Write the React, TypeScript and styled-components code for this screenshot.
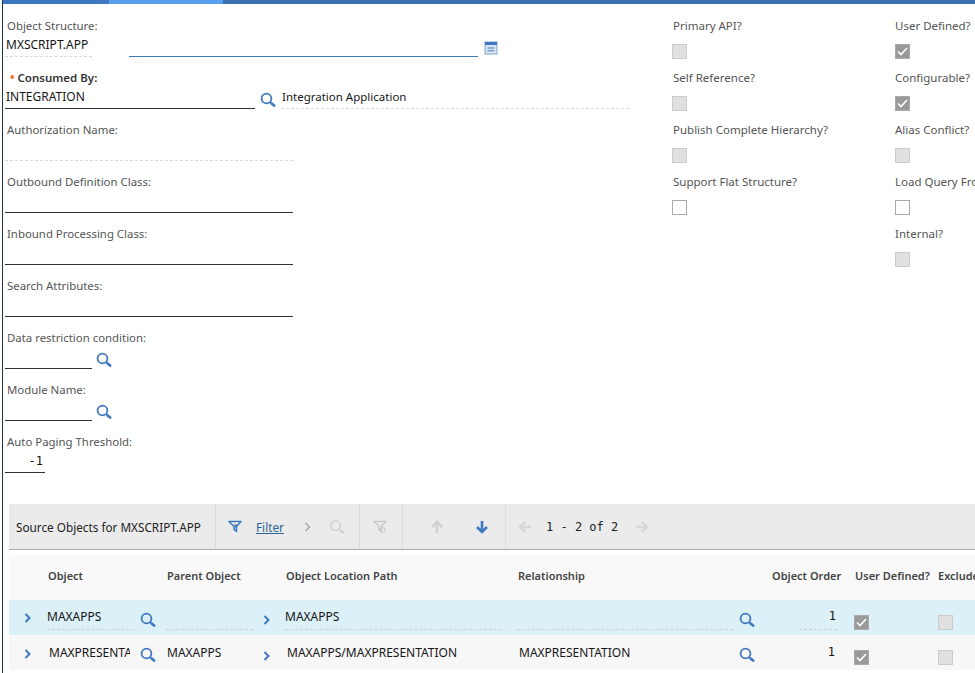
import React from "react";
import styled, { createGlobalStyle } from "styled-components";

const Global = createGlobalStyle`
  html, body { margin: 0; padding: 0; background: #fff; overflow: hidden; }
  body { font-family: "Noto Sans", "Liberation Sans", sans-serif; font-size: 12px; color: #161616; }
`;

const Page = styled.div`
  height: 673px; overflow: hidden; display: flex; flex-direction: column;
  border-left: 1px solid #1d3649; margin-left: 2px; box-sizing: border-box; width: 973px;
`;
const TopBar = styled.div`display: flex; height: 4px; background: #3b6fae; flex: none;`;
const TopSeg = styled.div<{ $w: number; $c: string }>`width: ${p => p.$w}px; background: ${p => p.$c};`;

const Form = styled.div`display: flex; height: 500px; flex: none; overflow: hidden;`;
const LeftCol = styled.div`width: 669px; flex: none; padding-left: 2px; box-sizing: border-box;`;
const CheckCol = styled.div<{ $w: number }>`width: ${p => p.$w}px; flex: none; white-space: nowrap;`;

const Field = styled.div`height: 52px; box-sizing: border-box; padding-top: 14px; position: relative;`;
const Label = styled.div<{ $bold?: boolean }>`
  height: 16px; line-height: 16px; padding-left: 2px; color: ${p => (p.$bold ? "#333" : "#555")};
  font-size: ${p => (p.$bold ? 11.5 : 11.4)}px;
  font-weight: ${p => (p.$bold ? 600 : 400)}; white-space: nowrap;
`;
const Req = styled.span`color: #f0782d; font-size: 12px; margin: 0 3px 0 3px; font-weight: 700;`;
const InputRow = styled.div`display: flex; align-items: flex-start; margin-top: 4px;`;
const Input = styled.div<{ $w: number; $line: "solid" | "dash" | "blue"; $ml?: number; $right?: boolean; $mono?: boolean; $fs?: number }>`
  width: ${p => p.$w}px; margin-left: ${p => p.$ml ?? 0}px; height: 19px; box-sizing: border-box; flex: none;
  line-height: 14px; padding: 0 ${p => (p.$right ? 2 : 1)}px; white-space: nowrap; color: #161616;
  font-size: ${p => p.$fs ?? 12}px; text-align: ${p => (p.$right ? "right" : "left")};
  font-family: ${p => (p.$mono ? '"DejaVu Sans Mono", monospace' : "inherit")};
  border-bottom: 1px ${p => (p.$line === "dash" ? "dashed #dadada" : p.$line === "blue" ? "solid #3f78b8" : "solid #333")};
`;
const IconSlot = styled.span<{ $ml: number; $mt?: number }>`
  display: block; flex: none; margin-left: ${p => p.$ml}px; margin-top: ${p => p.$mt ?? 0}px; line-height: 0;
`;

const CheckField = styled.div`height: 52px; box-sizing: border-box; padding-top: 14px; white-space: nowrap;`;
const CheckLabel = styled.div<{ $ml?: number }>`height: 16px; line-height: 16px; color: #555; font-size: 11.5px; margin-left: ${p => p.$ml ?? 0}px;`;
const Box = styled.span<{ $state: "off" | "on" | "open" }>`
  display: flex; align-items: center; justify-content: center; width: 15px; height: 15px; box-sizing: border-box;
  background: ${p => (p.$state === "on" ? "#999" : p.$state === "off" ? "#e0e0e0" : "#fff")};
  border: 1px solid ${p => (p.$state === "on" ? "#aaa" : p.$state === "off" ? "#ccc" : "#aaa")};
`;
const BoxWrap = styled.div`margin-top: 10px;`;

const Toolbar = styled.div`
  height: 46px; margin-left: 6px; background: #ebebeb; border-bottom: 1px solid #aaa; box-sizing: border-box;
  display: flex; align-items: stretch; flex: none; white-space: nowrap;
`;
const ToolSec = styled.div<{ $w: number; $last?: boolean }>`
  width: ${p => p.$w}px; flex: none; box-sizing: border-box; display: flex; align-items: center;
  border-right: ${p => (p.$last ? "none" : "1px solid #ddd")};
`;
const Title = styled.span`margin-left: 7px; font-size: 11.75px; color: #222;`;
const FilterLink = styled.a`font-size: 11.75px; color: #2a6496; text-decoration: underline; margin-left: 14px;`;
const Mono = styled.span`font-family: "DejaVu Sans Mono", monospace; font-size: 12px; color: #222; margin: 0 17px 0 14px;`;
const ToolIcon = styled.span<{ $ml: number }>`display: block; margin-left: ${p => p.$ml}px; line-height: 0; flex: none;`;

const Gap = styled.div`height: 5px; flex: none;`;
const TableWrap = styled.div`margin-left: 6px; flex: none;`;
const Cols = "38px 119px 119px 232px 254px 83px 83px 100px";
const Header = styled.div`
  display: grid; grid-template-columns: ${Cols}; height: 45px; box-sizing: border-box; padding-bottom: 4px;
  background: #f9f9f9; align-items: center;
`;
const HeadCell = styled.div`
  font-size: 11px; font-weight: 600; color: #444; white-space: nowrap; overflow: hidden; padding-left: 1px;
`;
const Row = styled.div<{ $sel?: boolean }>`
  display: grid; grid-template-columns: ${Cols}; height: 35px; align-items: start;
  background: ${p => (p.$sel ? "#dcf0f8" : "#f7f7f7")};
`;
const Cell = styled.div<{ $dx?: number }>`
  display: flex; align-items: flex-start; height: 35px; box-sizing: border-box; padding-left: ${p => p.$dx ?? 0}px; min-width: 0; overflow: hidden;
`;
const CellInput = styled.div<{ $w: number; $dash?: boolean; $right?: boolean; $mono?: boolean; $top?: number }>`
  width: ${p => p.$w}px; height: 30px; box-sizing: border-box; flex: none; padding-top: ${p => p.$top ?? 9}px; line-height: 15px; font-size: 12px; color: #161616;
  white-space: nowrap; overflow: hidden; text-align: ${p => (p.$right ? "right" : "left")};
  font-family: ${p => (p.$mono ? '"DejaVu Sans Mono", monospace' : "inherit")};
  padding-right: ${p => (p.$right ? 1 : 0)}px;
  border-bottom: 1px ${p => (p.$dash ? "dashed #c8d4da" : "solid transparent")};
`;
const Chevron = styled.span<{ $ml: number; $mt: number }>`display: block; margin-left: ${p => p.$ml}px; margin-top: ${p => p.$mt}px; line-height: 0; flex: none;`;
const RowBox = styled.div<{ $ml?: number }>`margin-top: 15px; margin-left: ${p => p.$ml ?? 0}px;`;

const Search = ({ c = "#3f78c0" }: { c?: string }) => (
  <svg width="16" height="16" viewBox="0 0 16 16" fill="none">
    <circle cx="6.5" cy="6.5" r="4.9" stroke={c} strokeWidth="1.8" />
    <path d="M10 10l1.2 1.2" stroke={c} strokeWidth="1.3" />
    <path d="M11.6 11.4l2.5 2.2" stroke={c} strokeWidth="2.7" strokeLinecap="round" />
  </svg>
);
const Detail = () => (
  <svg width="14" height="14" viewBox="0 0 14 14">
    <rect x="1" y="1" width="12" height="12" fill="#dce6f2" stroke="#7da3cf" />
    <rect x="1" y="1" width="12" height="3" fill="#3f78c0" />
    <path d="M3.5 7h7M3.5 9.8h7" stroke="#3f78c0" />
  </svg>
);
const Tick = () => (
  <svg width="11" height="9" viewBox="0 0 11 9" fill="none">
    <path d="M1 4.5l3 3L10 1" stroke="#fff" strokeWidth="1.6" />
  </svg>
);
const Chev = () => (
  <svg width="8" height="10" viewBox="0 0 8 10" fill="none">
    <path d="M1.5 1l4 4-4 4" stroke="#3f78c0" strokeWidth="2" />
  </svg>
);
const Funnel = ({ c, x }: { c: string; x?: boolean }) => (
  <svg width="14" height="14" viewBox="0 0 14 14" fill="none">
    <path d="M1 1.5h12L8.5 6.5v5L6 9.5v-3z" stroke={c} strokeWidth="1.5" strokeLinejoin="round" />
    {x ? <circle cx="9.5" cy="10" r="2.5" stroke={c} /> : <path d="M6 4.5h4.5L8 7V9.5z" fill={c} />}
  </svg>
);
const Arrow = ({ c, dir }: { c: string; dir: "up" | "down" | "left" | "right" }) => {
  const rot = { up: 0, right: 90, down: 180, left: 270 }[dir];
  return (
    <svg width="14" height="14" viewBox="0 0 14 14" fill="none" style={{ transform: `rotate(${rot}deg)` }}>
      <path d="M7 13V2M2 7l5-5 5 5" stroke={c} strokeWidth="2.6" />
    </svg>
  );
};

const Check = ({ s }: { s: "off" | "on" | "open" }) => <Box $state={s}>{s === "on" && <Tick />}</Box>;

const checks1: [string, "off" | "on" | "open"][] = [
  ["Primary API?", "off"],
  ["Self Reference?", "off"],
  ["Publish Complete Hierarchy?", "off"],
  ["Support Flat Structure?", "open"],
];
const checks2: [string, "off" | "on" | "open"][] = [
  ["User Defined?", "on"],
  ["Configurable?", "on"],
  ["Alias Conflict?", "off"],
  ["Load Query From", "open"],
  ["Internal?", "off"],
];

export default function App() {
  return (
    <Page>
      <Global />
      <TopBar>
        <TopSeg $w={106} $c="#3f78c0" />
        <TopSeg $w={114} $c="#5aa0f0" />
      </TopBar>
      <Form>
        <LeftCol>
          <Field>
            <Label>Object Structure:</Label>
            <InputRow>
              <Input $w={87} $line="dash">MXSCRIPT.APP</Input>
              <Input $w={349} $ml={37} $line="blue" />
              <IconSlot $ml={6} $mt={3}><Detail /></IconSlot>
            </InputRow>
          </Field>
          <Field>
            <Label $bold><Req>•</Req>Consumed By:</Label>
            <InputRow>
              <Input $w={250} $line="solid">INTEGRATION</Input>
              <IconSlot $ml={5} $mt={2}><Search /></IconSlot>
              <Input $w={348} $ml={5} $line="dash" $fs={11.5}>Integration Application</Input>
            </InputRow>
          </Field>
          <Field>
            <Label>Authorization Name:</Label>
            <InputRow><Input $w={288} $line="dash" /></InputRow>
          </Field>
          <Field>
            <Label>Outbound Definition Class:</Label>
            <InputRow><Input $w={288} $line="solid" /></InputRow>
          </Field>
          <Field>
            <Label>Inbound Processing Class:</Label>
            <InputRow><Input $w={288} $line="solid" /></InputRow>
          </Field>
          <Field>
            <Label>Search Attributes:</Label>
            <InputRow><Input $w={288} $line="solid" /></InputRow>
          </Field>
          <Field>
            <Label>Data restriction condition:</Label>
            <InputRow>
              <Input $w={87} $line="solid" />
              <IconSlot $ml={4} $mt={2}><Search /></IconSlot>
            </InputRow>
          </Field>
          <Field>
            <Label>Module Name:</Label>
            <InputRow>
              <Input $w={87} $line="solid" />
              <IconSlot $ml={4} $mt={2}><Search /></IconSlot>
            </InputRow>
          </Field>
          <Field>
            <Label>Auto Paging Threshold:</Label>
            <InputRow><Input $w={40} $line="solid" $right $mono>-1</Input></InputRow>
          </Field>
        </LeftCol>
        <CheckCol $w={223}>
          {checks1.map(([l, s]) => (
            <CheckField key={l}>
              <CheckLabel $ml={1}>{l}</CheckLabel>
              <BoxWrap><Check s={s} /></BoxWrap>
            </CheckField>
          ))}
        </CheckCol>
        <CheckCol $w={78}>
          {checks2.map(([l, s]) => (
            <CheckField key={l}>
              <CheckLabel>{l}</CheckLabel>
              <BoxWrap><Check s={s} /></BoxWrap>
            </CheckField>
          ))}
        </CheckCol>
      </Form>
      <Toolbar>
        <ToolSec $w={207}><Title>Source Objects for MXSCRIPT.APP</Title></ToolSec>
        <ToolSec $w={144}>
          <ToolIcon $ml={12}><Funnel c="#3f78c0" /></ToolIcon>
          <FilterLink>Filter</FilterLink>
          <ToolIcon $ml={20}><svg width="8" height="10" viewBox="0 0 8 10" fill="none"><path d="M1.5 1l4 4-4 4" stroke="#aaa" strokeWidth="1.6" /></svg></ToolIcon>
          <ToolIcon $ml={17}><Search c="#d4d4d4" /></ToolIcon>
        </ToolSec>
        <ToolSec $w={43}><ToolIcon $ml={13}><Funnel c="#c8c8c8" x /></ToolIcon></ToolSec>
        <ToolSec $w={103}>
          <ToolIcon $ml={27}><Arrow c="#d0d0d0" dir="up" /></ToolIcon>
          <ToolIcon $ml={31}><Arrow c="#3f78c0" dir="down" /></ToolIcon>
        </ToolSec>
        <ToolSec $w={300} $last>
          <ToolIcon $ml={12}><Arrow c="#d8d8d8" dir="left" /></ToolIcon>
          <Mono>1 - 2 of 2</Mono>
          <ToolIcon $ml={0}><Arrow c="#d8d8d8" dir="right" /></ToolIcon>
        </ToolSec>
      </Toolbar>
      <Gap />
      <TableWrap>
        <Header>
          <span />
          <HeadCell>Object</HeadCell>
          <HeadCell>Parent Object</HeadCell>
          <HeadCell>Object Location Path</HeadCell>
          <HeadCell>Relationship</HeadCell>
          <HeadCell>Object Order</HeadCell>
          <HeadCell>User Defined?</HeadCell>
          <HeadCell>Excluded?</HeadCell>
        </Header>
        <Row $sel>
          <Cell><Chevron $ml={15} $mt={13}><Chev /></Chevron></Cell>
          <Cell>
            <CellInput $w={87} $dash>MAXAPPS</CellInput>
            <IconSlot $ml={6} $mt={12}><Search /></IconSlot>
          </Cell>
          <Cell>
            <CellInput $w={87} $dash />
            <Chevron $ml={10} $mt={15}><Chev /></Chevron>
          </Cell>
          <Cell><CellInput $w={217} $dash>MAXAPPS</CellInput></Cell>
          <Cell>
            <CellInput $w={216} $dash />
            <IconSlot $ml={6} $mt={12}><Search /></IconSlot>
          </Cell>
          <Cell $dx={28}><CellInput $w={38} $dash $right $mono>1</CellInput></Cell>
          <Cell><RowBox><Check s="on" /></RowBox></Cell>
          <Cell><RowBox $ml={1}><Check s="off" /></RowBox></Cell>
        </Row>
        <Row>
          <Cell><Chevron $ml={15} $mt={14}><Chev /></Chevron></Cell>
          <Cell $dx={2}>
            <CellInput $w={81} $top={10}>MAXPRESENTATION</CellInput>
            <IconSlot $ml={10} $mt={12}><Search /></IconSlot>
          </Cell>
          <Cell $dx={1}>
            <CellInput $w={86} $top={10}>MAXAPPS</CellInput>
            <Chevron $ml={10} $mt={16}><Chev /></Chevron>
          </Cell>
          <Cell $dx={2}><CellInput $w={215} $top={10}>MAXAPPS/MAXPRESENTATION</CellInput></Cell>
          <Cell $dx={2}>
            <CellInput $w={214} $top={10}>MAXPRESENTATION</CellInput>
            <IconSlot $ml={6} $mt={12}><Search /></IconSlot>
          </Cell>
          <Cell $dx={27}><CellInput $w={38} $right $mono $top={10}>1</CellInput></Cell>
          <Cell><RowBox><Check s="on" /></RowBox></Cell>
          <Cell><RowBox $ml={1}><Check s="off" /></RowBox></Cell>
        </Row>
      </TableWrap>
    </Page>
  );
}
